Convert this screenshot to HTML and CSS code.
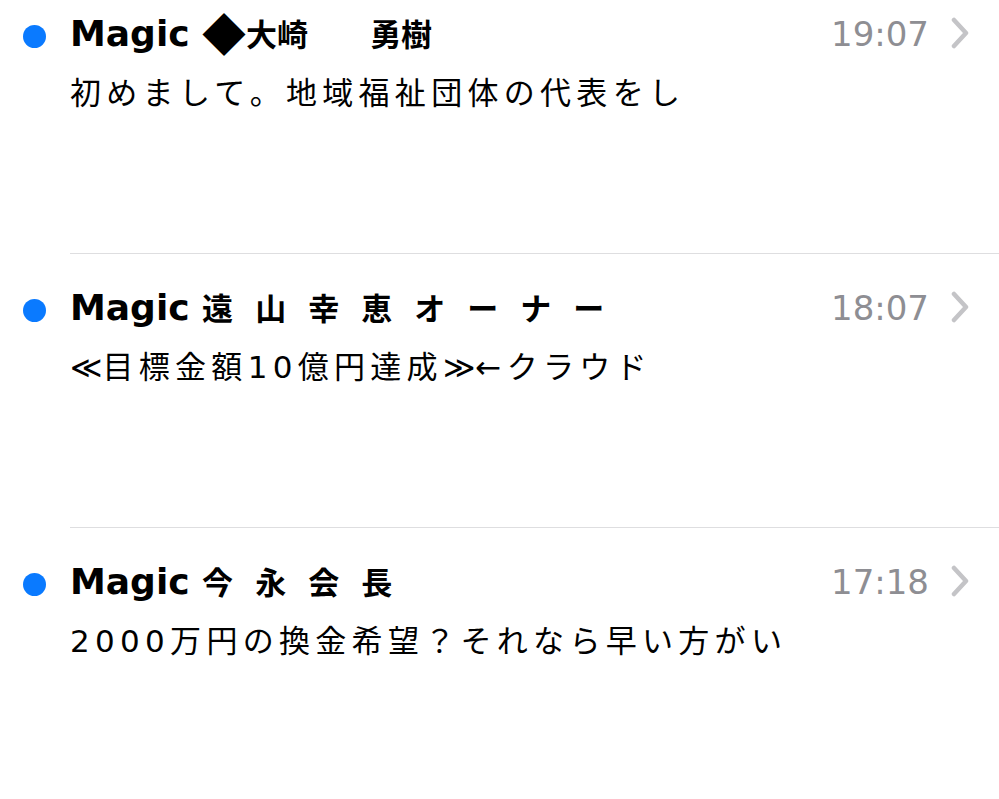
FILE: index.html
```html
<!DOCTYPE html>
<html lang="ja">
<head>
<meta charset="utf-8">
<title>Mail</title>
<link rel="stylesheet" href="styles.css">
</head>
<body>
<ul class="list">
  <li class="row">
    <span class="dot"></span>
    <div class="content">
      <div class="head">
        <span class="sender">Magic <span class="name"><span class="mark">◆</span>大崎　　勇樹</span></span>
        <span class="time">19:07</span>
        <svg class="chev" width="18" height="32" viewBox="0 0 18 32"><path d="M3 3 L15 16 L3 29" fill="none" stroke="#c4c4c7" stroke-width="4.5" stroke-linecap="round" stroke-linejoin="round"/></svg>
      </div>
      <div class="preview">初めまして。地域福祉団体の代表をし</div>
    </div>
  </li>
  <li class="row">
    <span class="dot"></span>
    <div class="content">
      <div class="head">
        <span class="sender">Magic <span class="name">遠 山 幸 恵 オ ー ナ ー</span></span>
        <span class="time">18:07</span>
        <svg class="chev" width="18" height="32" viewBox="0 0 18 32"><path d="M3 3 L15 16 L3 29" fill="none" stroke="#c4c4c7" stroke-width="4.5" stroke-linecap="round" stroke-linejoin="round"/></svg>
      </div>
      <div class="preview"><span class="sym">≪</span>目標金額10億円達成<span class="sym">≫</span>←クラウド</div>
    </div>
  </li>
  <li class="row">
    <span class="dot"></span>
    <div class="content">
      <div class="head">
        <span class="sender">Magic <span class="name">今 永 会 長</span></span>
        <span class="time">17:18</span>
        <svg class="chev" width="18" height="32" viewBox="0 0 18 32"><path d="M3 3 L15 16 L3 29" fill="none" stroke="#c4c4c7" stroke-width="4.5" stroke-linecap="round" stroke-linejoin="round"/></svg>
      </div>
      <div class="preview">2000万円の換金希望？それなら早い方がい</div>
    </div>
  </li>
</ul>
</body>
</html>
```
FILE: styles.css
```css
html, body {
  margin: 0;
  padding: 0;
  background: #ffffff;
}
body {
  font-family: "DejaVu Sans", "Noto Sans CJK JP", sans-serif;
  color: #000;
  overflow: hidden;
}
.list {
  list-style: none;
  margin: -20px 0 0 0;
  padding: 0;
}
.row {
  display: flex;
  height: 274px;
}
.dot {
  flex: none;
  width: 23px;
  height: 23px;
  border-radius: 50%;
  background: #0a7aff;
  margin: 45px 24px 0 23px;
}
.content {
  flex: 1;
  min-width: 0;
  border-bottom: 1.5px solid #dedee0;
  padding-top: 34px;
  box-sizing: border-box;
}
.head {
  display: flex;
  align-items: baseline;
  height: 40px;
  line-height: 40px;
  padding-right: 30px;
}
.sender {
  flex: 1;
  font-size: 36px;
  font-weight: 700;
  white-space: nowrap;
}
.name {
  font-family: "Noto Sans CJK JP", sans-serif;
  font-size: 31px;
  line-height: 30px;
  word-spacing: 15px;
}
.mark {
  font-size: 44px;
  line-height: 0;
  vertical-align: -5px;
}
.time {
  font-size: 34px;
  color: #8e8e93;
  margin-right: 22px;
}
.chev {
  flex: none;
  align-self: center;
  position: relative;
  top: -1px;
}
.preview {
  margin-top: 19px;
  font-family: "DejaVu Sans", "Noto Sans CJK JP", sans-serif;
  font-size: 31px;
  line-height: 40px;
  letter-spacing: 5.3px;
  white-space: nowrap;
}
.sym {
  letter-spacing: 0;
}
```
